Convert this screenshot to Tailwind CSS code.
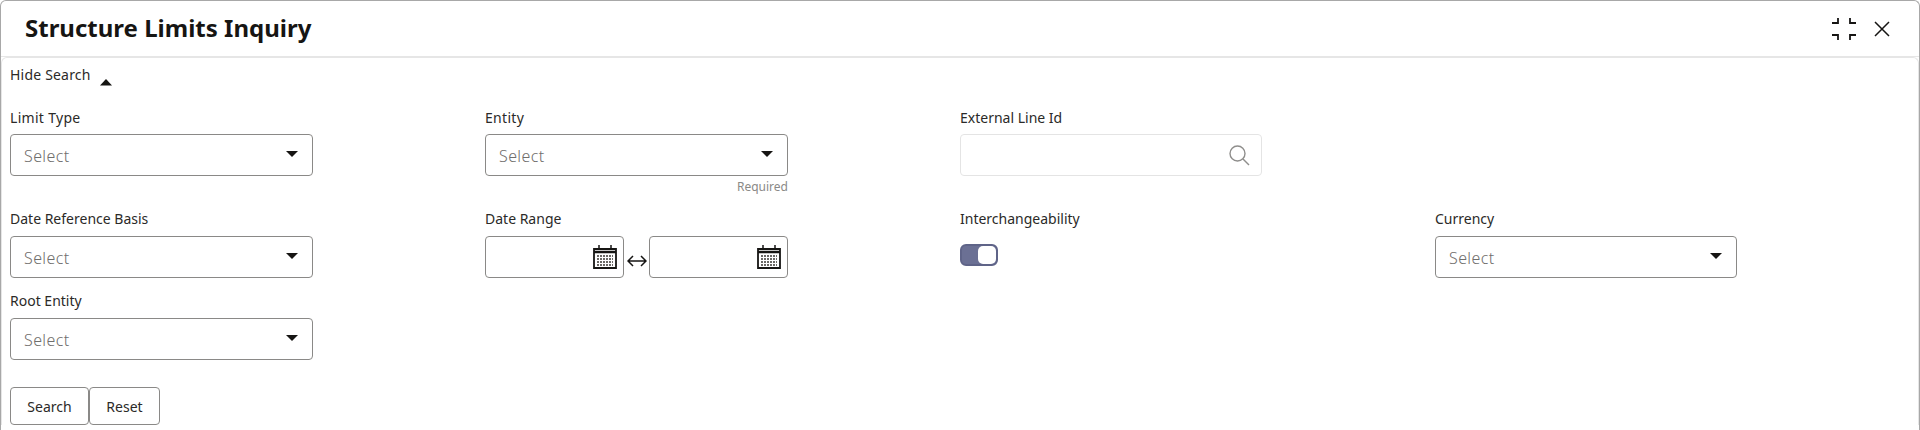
<!DOCTYPE html>
<html>
<head>
<meta charset="utf-8">
<script src="https://cdn.jsdelivr.net/npm/@tailwindcss/browser@4"></script>
</head>
<body class="bg-white overflow-hidden font-['Noto_Sans',sans-serif] text-[#161513]">
<div class="h-[430px] w-[1920px] overflow-hidden border-t border-l border-r border-[#a8a8a8] rounded-t-[6px]">
  <header class="h-[56px] flex items-center justify-between pl-[24px] pr-[29px] border-b border-[#e6e6e6]">
    <h1 class="text-[24px] leading-[30px] font-bold -mt-[2px]">Structure Limits Inquiry</h1>
    <div class="flex items-center gap-[18px]">
      <svg width="24" height="22" viewBox="0 0 24 22" fill="none" stroke="#161513" stroke-width="1.8"><path d="M0 5H6V0M18 0V5H24M0 17H6V22M24 17H18V22"/></svg>
      <svg width="16" height="16" viewBox="0 0 16 16" fill="none" stroke="#161513" stroke-width="1.5"><path d="M1 1L15 15M15 1L1 15"/></svg>
    </div>
  </header>
  <section class="pl-[8px] border-t border-l border-r border-[#e6e6e6] rounded-t-[6px]">
    <div class="h-[50px] pt-[7px] flex items-start text-[14px] leading-[20px] text-[#2b2a28]">
      <span class="tracking-[0.2px]">Hide Search</span>
      <svg class="ml-[8px] mt-[14px]" width="14" height="7" viewBox="0 0 14 7"><path d="M7 0L13 6.500H1Z" fill="#161513"/></svg>
    </div>
    <div class="grid grid-cols-[475px_475px_475px_475px]">
      <div class="h-[102px]">
        <label class="block h-[26px] text-[14px] leading-[19px] tracking-[0.3px] text-[#2b2a28]">Limit Type</label>
        <div class="w-[303px] h-[42px] border border-[#8a8987] rounded-[4px] flex items-center justify-between pl-[13px] pr-[14px]">
          <span class="text-[16px] tracking-[0.4px] font-light mt-[2px] text-[#6f6e6c]">Select</span>
          <svg width="12" height="6" viewBox="0 0 12 6" class="-mt-[2px]"><path d="M0 0H12L6 6Z" fill="#161513"/></svg>
        </div>
      </div>
      <div class="h-[102px]">
        <label class="block h-[26px] text-[14px] leading-[19px] tracking-[0.3px] text-[#2b2a28]">Entity</label>
        <div class="w-[303px] h-[42px] border border-[#8a8987] rounded-[4px] flex items-center justify-between pl-[13px] pr-[14px]">
          <span class="text-[16px] tracking-[0.4px] font-light mt-[2px] text-[#6f6e6c]">Select</span>
          <svg width="12" height="6" viewBox="0 0 12 6" class="-mt-[2px]"><path d="M0 0H12L6 6Z" fill="#161513"/></svg>
        </div>
        <p class="w-[303px] mt-[3px] text-right text-[12px] leading-[16px] text-[#8a8987]">Required</p>
      </div>
      <div class="h-[102px]">
        <label class="block h-[26px] text-[14px] leading-[19px] text-[#2b2a28]">External Line Id</label>
        <div class="w-[302px] h-[42px] border border-[#e4e4e4] rounded-[4px] flex items-center justify-end pr-[11px]">
          <svg width="22" height="22" viewBox="0 0 22 22" fill="none" stroke="#8f8e8c" stroke-width="1.4"><circle cx="9.500" cy="9.500" r="7.500"/><path d="M15 15L21 21"/></svg>
        </div>
      </div>
      <div></div>

      <div class="h-[82px]">
        <label class="block h-[26px] text-[14px] leading-[17px] text-[#2b2a28]">Date Reference Basis</label>
        <div class="w-[303px] h-[42px] border border-[#8a8987] rounded-[4px] flex items-center justify-between pl-[13px] pr-[14px]">
          <span class="text-[16px] tracking-[0.4px] font-light mt-[2px] text-[#6f6e6c]">Select</span>
          <svg width="12" height="6" viewBox="0 0 12 6" class="-mt-[2px]"><path d="M0 0H12L6 6Z" fill="#161513"/></svg>
        </div>
      </div>
      <div class="h-[82px]">
        <label class="block h-[26px] text-[14px] leading-[17px] text-[#2b2a28]">Date Range</label>
        <div class="w-[303px] flex items-center justify-between">
          <div class="w-[139px] h-[42px] border border-[#8a8987] rounded-[4px] flex items-center justify-end pr-[6px]">
            <svg width="24" height="24" viewBox="0 0 24 24" fill="none"><path d="M1 4H23V23H1Z" stroke="#161513" stroke-width="1.800"/><path d="M1 7H23" stroke="#161513" stroke-width="2.500"/><path d="M6 0V5M18 0V5" stroke="#161513" stroke-width="1.500"/><path d="M4 11H20M4 14H20M4 17H20M4 20H20" stroke="#6a6865" stroke-width="1.800" stroke-dasharray="2 1"/></svg>
          </div>
          <svg width="20" height="12" viewBox="0 0 20 12" fill="none" stroke="#161513" stroke-width="1.500" class="mt-[8px]"><path d="M1 6H19M6 1L1 6L6 11M14 1L19 6L14 11"/></svg>
          <div class="w-[139px] h-[42px] border border-[#8a8987] rounded-[4px] flex items-center justify-end pr-[6px]">
            <svg width="24" height="24" viewBox="0 0 24 24" fill="none"><path d="M1 4H23V23H1Z" stroke="#161513" stroke-width="1.800"/><path d="M1 7H23" stroke="#161513" stroke-width="2.500"/><path d="M6 0V5M18 0V5" stroke="#161513" stroke-width="1.500"/><path d="M4 11H20M4 14H20M4 17H20M4 20H20" stroke="#6a6865" stroke-width="1.800" stroke-dasharray="2 1"/></svg>
          </div>
        </div>
      </div>
      <div class="h-[82px]">
        <label class="block h-[26px] text-[14px] leading-[17px] text-[#2b2a28]">Interchangeability</label>
        <div class="w-[38px] h-[22px] mt-[8px] bg-[#6b7094] border-2 border-[#5f6488] rounded-[6px] flex items-center justify-end">
          <span class="block w-[18px] h-[18px] bg-white rounded-[5px]"></span>
        </div>
      </div>
      <div class="h-[82px]">
        <label class="block h-[26px] text-[14px] leading-[17px] text-[#2b2a28]">Currency</label>
        <div class="w-[302px] h-[42px] border border-[#8a8987] rounded-[4px] flex items-center justify-between pl-[13px] pr-[14px]">
          <span class="text-[16px] tracking-[0.4px] font-light mt-[2px] text-[#6f6e6c]">Select</span>
          <svg width="12" height="6" viewBox="0 0 12 6" class="-mt-[2px]"><path d="M0 0H12L6 6Z" fill="#161513"/></svg>
        </div>
      </div>

      <div class="h-[95px]">
        <label class="block h-[26px] text-[14px] leading-[17px] text-[#2b2a28]">Root Entity</label>
        <div class="w-[303px] h-[42px] border border-[#8a8987] rounded-[4px] flex items-center justify-between pl-[13px] pr-[14px]">
          <span class="text-[16px] tracking-[0.4px] font-light mt-[2px] text-[#6f6e6c]">Select</span>
          <svg width="12" height="6" viewBox="0 0 12 6" class="-mt-[2px]"><path d="M0 0H12L6 6Z" fill="#161513"/></svg>
        </div>
      </div>
    </div>
    <div class="flex">
      <button class="w-[79px] h-[38px] border border-[#8a8987] rounded-[4px] text-[14px] text-[#2b2a28]">Search</button>
      <button class="w-[71px] h-[38px] border border-[#8a8987] rounded-[4px] text-[14px] text-[#2b2a28]">Reset</button>
    </div>
  </section>
</div>
</body>
</html>
